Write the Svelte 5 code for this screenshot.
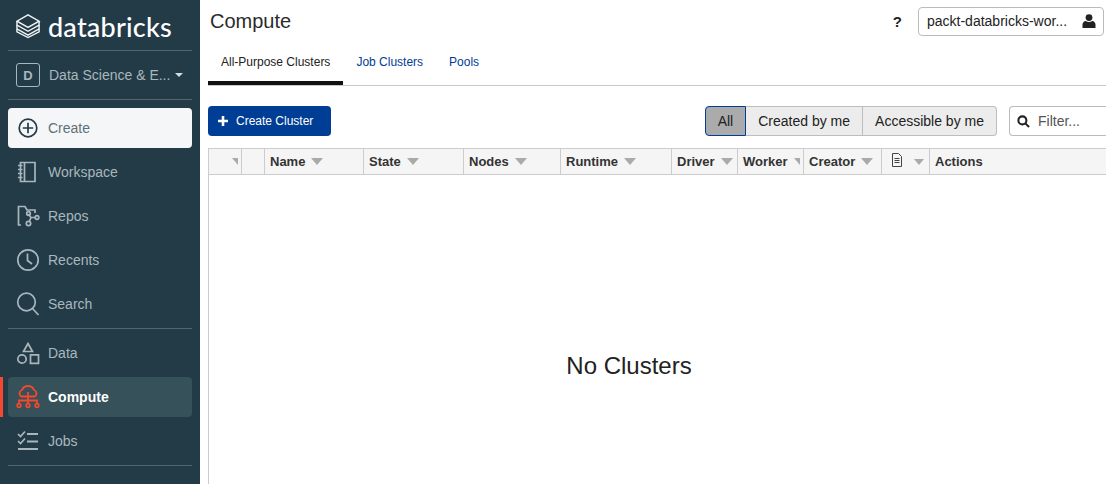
<script>
  const navTop = [
    { key: 'workspace', label: 'Workspace' },
    { key: 'repos', label: 'Repos' },
    { key: 'recents', label: 'Recents' },
    { key: 'search', label: 'Search' }
  ];
  const navBottom = [
    { key: 'data', label: 'Data' },
    { key: 'compute', label: 'Compute', active: true },
    { key: 'jobs', label: 'Jobs' }
  ];
  const columns = [
    { label: '', w: 33, caret: 'clip' },
    { label: '', w: 23 },
    { label: 'Name', w: 99, caret: 'full' },
    { label: 'State', w: 100, caret: 'full' },
    { label: 'Nodes', w: 97, caret: 'full' },
    { label: 'Runtime', w: 111, caret: 'full' },
    { label: 'Driver', w: 66, caret: 'full' },
    { label: 'Worker', w: 66, caret: 'clip' },
    { label: 'Creator', w: 78, caret: 'full' },
    { label: '', w: 48, doc: true },
    { label: 'Actions', w: 177 }
  ];
</script>

{#snippet navIcon(key)}
  <svg class="nav-icon" viewBox="0 0 24 24" width="24" height="24" fill="none" stroke="currentColor" stroke-width="1.7">
    {#if key === 'workspace'}
      <path d="M4.5 2.5h14.5v19H4.5z" />
      <path d="M8.5 2.5v19M2 5.5h4.5M2 9.5h4.5M2 13.5h4.5M2 17.5h4.5" />
    {:else if key === 'repos'}
      <path d="M5 21H2.5V2.5h6.5l2 3.5h8v3" />
      <path d="M12.5 10l2.5 3.5-2 4.5M15 13.500h4" />
      <circle cx="12.500" cy="9.500" r="1.800" />
      <circle cx="21" cy="13.500" r="1.800" />
      <circle cx="12.500" cy="19.500" r="2.200" />
    {:else if key === 'recents'}
      <circle cx="12" cy="12" r="10.200" />
      <path d="M11.500 5.500v7l4.500 3.500" />
    {:else if key === 'search'}
      <circle cx="10.500" cy="10" r="8.800" />
      <path d="M16.500 16.500l6 6.500" />
    {:else if key === 'data'}
      <path d="M12 2.500l4.500 8h-9z" />
      <circle cx="6" cy="18" r="4.200" />
      <path d="M14.500 13.800h8v8.500h-8z" />
    {:else if key === 'compute'}
      <path d="M5.500 11.500a3.500 3.500 0 0 1 .5-6.500a6.500 6.500 0 0 1 12 0a3.500 3.500 0 0 1 .5 6.500z" stroke-width="1.800" />
      <path d="M12 7v12M3 19v-3.500h18V19" stroke-width="1.800" />
      <circle cx="3" cy="20.500" r="1.800" />
      <circle cx="12" cy="20.500" r="1.800" />
      <circle cx="21" cy="20.500" r="1.800" />
    {:else}
      <path d="M2 5l2.500 2.500L9 2.500M2 12l2.500 2.500L9 9.500" />
      <path d="M11 5h11M11 12.500h11M2 20h20" stroke-width="2" />
    {/if}
  </svg>
{/snippet}

<div class="page">
  <aside class="sidebar">
    <div class="logo">
      <svg viewBox="0 0 26 26" width="25" height="26" fill="none" stroke="currentColor" stroke-width="1.500">
        <path d="M12.500 1.500L24 8l-11.500 6.500L1 8z" />
        <path d="M1 8v4l11.500 6.500L24 12V8" />
        <path d="M1 12v4l11.500 6.500L24 16v-4" />
        <path d="M1 16v3l11.500 6L24 19v-3" />
      </svg>
      <span class="logo-text">databricks</span>
    </div>
    <div class="persona">
      <span class="persona-badge">D</span>
      <span class="persona-name">Data Science &amp; E...</span>
      <span class="persona-caret"></span>
    </div>
    <div class="nav-section top">
      <div class="create">
        <svg viewBox="0 0 20 20" width="20" height="20" fill="none" stroke="currentColor" stroke-width="1.700">
          <circle cx="10" cy="10" r="8.800" />
          <path d="M10 4.800v10.400M4.800 10h10.400" />
        </svg>
        <span>Create</span>
      </div>
      {#each navTop as item}
        <div class="nav-item">
          {@render navIcon(item.key)}
          <span>{item.label}</span>
        </div>
      {/each}
    </div>
    <div class="nav-section bottom">
      {#each navBottom as item}
        <div class="nav-item" class:active={item.active}>
          {@render navIcon(item.key)}
          <span>{item.label}</span>
        </div>
      {/each}
    </div>
  </aside>

  <main class="main">
    <header class="topbar">
      <h1>Compute</h1>
      <span class="help">?</span>
      <div class="account">
        <span>packt-databricks-wor...</span>
        <svg viewBox="0 0 14 14" width="14" height="14" fill="currentColor">
          <circle cx="7" cy="3.600" r="3.400" />
          <path d="M0.500 14v-3.200c0-2 1.500-3.800 3.200-3.800c1 .7 2.100 1 3.300 1s2.300-.3 3.300-1c1.700 0 3.200 1.800 3.200 3.800V14z" />
        </svg>
      </div>
    </header>

    <nav class="tabs">
      <span class="tab current">All-Purpose Clusters</span>
      <span class="tab">Job Clusters</span>
      <span class="tab">Pools</span>
    </nav>

    <div class="toolbar">
      <button class="primary">
        <svg viewBox="0 0 10 10" width="10" height="10" fill="currentColor">
          <path d="M3.700 0h2.600v3.700H10v2.600H6.300V10H3.700V6.300H0V3.700h3.700z" />
        </svg>
        Create Cluster
      </button>
      <div class="segments">
        <span class="seg on">All</span>
        <span class="seg">Created by me</span>
        <span class="seg">Accessible by me</span>
      </div>
      <div class="filter">
        <svg viewBox="0 0 14 14" width="13" height="13" fill="none" stroke="currentColor" stroke-width="2.200">
          <circle cx="5.800" cy="5.800" r="4.300" />
          <path d="M9 9l4 4" />
        </svg>
        <span>Filter...</span>
      </div>
    </div>

    <div class="table">
      <div class="thead">
        {#each columns as col}
          <div class="th" style="width: {col.w}px">
            {#if col.doc}
              <svg class="doc" viewBox="0 0 12 14" width="12" height="14" fill="none" stroke="currentColor">
                <path d="M1.500 .5h6l3 3v10h-9z" />
                <path d="M3.500 5.500h5M3.500 7.500h5M3.500 9.500h5" />
              </svg>
              <span class="caret small"></span>
            {:else}
              {#if col.label}<span>{col.label}</span>{/if}
              {#if col.caret === 'full'}<span class="caret"></span>{/if}
              {#if col.caret === 'clip'}<span class="caret clip"></span>{/if}
            {/if}
          </div>
        {/each}
      </div>
      <div class="tbody">No Clusters</div>
    </div>
  </main>
</div>

<style>
  :global(body) {
    margin: 0;
    background: #fff;
    font-family: "Liberation Sans", Arial, sans-serif;
  }

  .page {
    display: flex;
    width: 1113px;
    height: 484px;
    overflow: hidden;
  }

  /* sidebar */
  .sidebar {
    width: 200px;
    flex: none;
    box-sizing: border-box;
    padding: 0 8px;
    background: #223b47;
    color: #bdc8cd;
    font-size: 14px;
  }
  .logo {
    height: 51px;
    box-sizing: border-box;
    display: flex;
    align-items: center;
    gap: 7px;
    padding: 2px 0 0 8px;
    color: #f1f4f5;
    border-bottom: 1px solid #51666f;
  }
  .logo-text {
    font-family: Lato, sans-serif;
    font-size: 27px;
    font-weight: 500;
    line-height: 1;
    letter-spacing: 0.2px;
    color: #fff;
  }
  .persona {
    height: 49px;
    box-sizing: border-box;
    display: flex;
    align-items: center;
    padding: 0 8px;
    border-bottom: 1px solid #51666f;
    color: #a9b7bd;
  }
  .persona-badge {
    width: 22px;
    height: 22px;
    border: 1.500px solid #a9b7bd;
    border-radius: 3px;
    display: flex;
    align-items: center;
    justify-content: center;
    font-size: 13px;
    font-weight: 700;
    margin-right: 9px;
  }
  .persona-name {
    white-space: nowrap;
  }
  .persona-caret {
    width: 0;
    height: 0;
    margin-left: 5px;
    border: 4px solid transparent;
    border-top: 4px solid #d5dcdf;
    border-bottom: 0;
  }
  .nav-section {
    display: flex;
    flex-direction: column;
    gap: 4px;
  }
  .nav-section.top {
    padding: 8px 0 4px;
    height: 220px;
    box-sizing: content-box;
    padding-bottom: 0;
    border-bottom: 1px solid #51666f;
  }
  .nav-section.bottom {
    padding: 4px 0;
    border-bottom: 1px solid #51666f;
  }
  .create {
    height: 40px;
    display: flex;
    align-items: center;
    gap: 10px;
    padding-left: 10px;
    background: #f4f6f8;
    border-radius: 4px;
    color: #5f7077;
  }
  .create svg {
    color: #223b47;
  }
  .nav-item {
    position: relative;
    height: 40px;
    display: flex;
    align-items: center;
    gap: 8px;
    padding-left: 8px;
    border-radius: 4px;
    color: #a9b7bd;
  }
  .nav-icon {
    flex: none;
  }
  .nav-item.active {
    background: #365159;
    color: #fff;
    font-weight: 700;
  }
  .nav-item.active .nav-icon {
    color: #f4492f;
  }
  .nav-item.active::before {
    content: "";
    position: absolute;
    left: -8px;
    top: 0;
    bottom: 0;
    width: 3px;
    background: #f4492f;
  }

  /* main */
  .main {
    width: 898px;
    flex: none;
    margin-left: 8px;
    overflow: hidden;
    color: #222;
  }
  .topbar {
    height: 42px;
    display: flex;
    align-items: center;
    padding: 0 2px 0 2px;
  }
  h1 {
    margin: 0 auto 0 0;
    font-size: 20px;
    font-weight: 400;
    color: #2b2b2b;
  }
  .help {
    font-size: 15px;
    font-weight: 700;
    margin-right: 16px;
  }
  .account {
    width: 186px;
    height: 29px;
    box-sizing: border-box;
    display: flex;
    align-items: center;
    justify-content: space-between;
    padding: 0 7px 0 8px;
    border: 1px solid #bbb;
    border-radius: 4px;
    font-size: 14px;
    background: #fff;
  }
  .tabs {
    height: 44px;
    display: flex;
    box-sizing: border-box;
    border-bottom: 1px solid #c8c8c8;
  }
  .tab {
    padding: 0 13px;
    height: 43px;
    box-sizing: border-box;
    padding-top: 13px;
    font-size: 12px;
    color: #003d94;
  }
  .tab.current {
    color: #222;
    border-bottom: 4px solid #111;
  }
  .toolbar {
    display: flex;
    align-items: center;
    margin-top: 20px;
    height: 30px;
    overflow: hidden;
  }
  .primary {
    width: 123px;
    height: 30px;
    display: flex;
    align-items: center;
    gap: 8px;
    padding: 0 0 0 10px;
    border: 0;
    border-radius: 4px;
    background: #003d94;
    color: #fff;
    font-family: inherit;
    font-size: 12px;
  }
  .segments {
    display: flex;
    height: 30px;
    margin-left: auto;
    margin-right: 12px;
  }
  .seg {
    display: flex;
    align-items: center;
    padding: 0 12px;
    font-size: 14px;
    background: #ececec;
    border: 1px solid #bdbdbd;
    border-left: 0;
  }
  .seg:last-child {
    border-radius: 0 4px 4px 0;
  }
  .seg.on {
    background: #ababab;
    border: 1px solid #003d94;
    border-radius: 4px 0 0 4px;
  }
  .filter {
    width: 97px;
    height: 30px;
    flex: none;
    box-sizing: border-box;
    display: flex;
    align-items: center;
    gap: 8px;
    padding-left: 7px;
    border: 1px solid #bbb;
    border-right: 0;
    border-radius: 4px 0 0 4px;
    font-size: 14px;
    color: #555;
  }
  .filter svg {
    color: #222;
  }
  .table {
    margin-top: 12px;
    border-left: 1px solid #ccc;
    height: 336px;
  }
  .thead {
    display: flex;
    height: 27px;
    box-sizing: border-box;
    background: #f5f5f5;
    border-top: 1px solid #ccc;
    border-bottom: 1px solid #ccc;
  }
  .th {
    flex: none;
    box-sizing: border-box;
    display: flex;
    align-items: center;
    gap: 6px;
    padding-left: 5px;
    border-right: 1px solid #ccc;
    font-size: 13px;
    font-weight: 700;
    color: #333;
    overflow: hidden;
    white-space: nowrap;
  }
  .th:first-child {
    justify-content: flex-end;
    padding-right: 3px;
  }
  .th:last-child {
    border-right: 0;
  }
  .caret {
    flex: none;
    width: 0;
    height: 0;
    border-left: 6px solid transparent;
    border-right: 6px solid transparent;
    border-top: 7px solid #aaa;
  }
  .caret.clip {
    border-left: 6px solid transparent;
    border-right: 0;
  }
  .caret.small {
    border-left-width: 5px;
    border-right-width: 5px;
    border-top-width: 6px;
    margin-left: 5px;
  }
  .doc {
    margin: -4px 0 0 4px;
    color: #444;
  }
  .tbody {
    width: 840px;
    padding-top: 177px;
    text-align: center;
    font-size: 24px;
    line-height: 28px;
    color: #222;
  }
</style>
